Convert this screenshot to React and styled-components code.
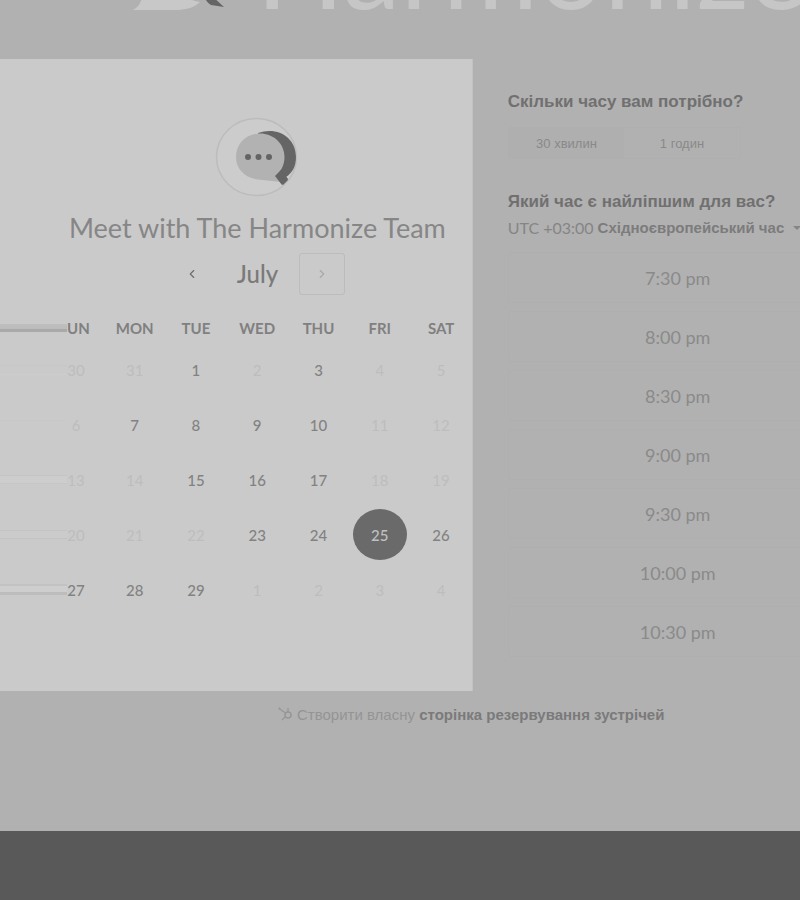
import React, { useState } from "react";
import styled, { createGlobalStyle } from "styled-components";
import { ChevronLeft, ChevronRight } from "lucide-react";

const GlobalStyle = createGlobalStyle`
  *, *::before, *::after { box-sizing: border-box; }
  body { margin: 0; background: #b1b1b1; }
  button { font: inherit; color: inherit; background: none; border: 0; padding: 0; cursor: pointer; }
  a { color: inherit; text-decoration: none; }
`;

const Page = styled.div`
  min-height: 100vh;
  display: flex;
  flex-direction: column;
  overflow: hidden;
  background: #b1b1b1;
  color: #747474;
  font-family: Lato, "Liberation Sans", sans-serif;
`;

const Header = styled.header`
  height: 59px;
  padding: 0 0 34px 132px;
  display: flex;
  align-items: flex-end;
  gap: 28px;
  overflow: hidden;
`;

const BrandMark = styled.svg`
  flex: none;
  width: 96px;
  height: 100px;
  margin-bottom: 15px;
`;

const BrandName = styled.span`
  flex: none;
  color: #c6c6c6;
  font-size: 116px;
  line-height: 120px;
  white-space: nowrap;
`;

const Scheduler = styled.main`
  display: grid;
  grid-template-columns: 13fr 9fr;
`;

const CalendarPanel = styled.section`
  min-width: 0;
  min-height: 632px;
  padding-top: 57px;
  background: #cacaca;
  border-right: 1px solid #c2c2c2;
`;

const Intro = styled.div`
  margin-left: 43px;
  display: flex;
  flex-direction: column;
  align-items: center;
`;

const Avatar = styled.svg`
  width: 84px;
  height: 82px;
`;

const Title = styled.h1`
  margin: 12px 0 0;
  color: #868686;
  font-size: 27px;
  line-height: 36px;
  font-weight: 400;
  white-space: nowrap;
`;

const MonthBar = styled.div`
  margin-top: 7px;
  display: grid;
  grid-template-columns: 46px 84px 46px;
  align-items: center;
`;

const MonthName = styled.h2`
  margin: 0;
  color: #7a7a7a;
  font-size: 24px;
  line-height: 42px;
  font-weight: 500;
  text-align: center;
`;

const MonthButton = styled.button`
  height: 42px;
  display: flex;
  align-items: center;
  justify-content: center;
  border-radius: 3px;
  border: 1px solid ${(p) => (p.$framed ? "#bcbcbc" : "transparent")};
  color: ${(p) => (p.$framed ? "#a8a8a8" : "#6c6c6c")};
`;

const CalendarTable = styled.table`
  width: 100%;
  margin-top: 19px;
  table-layout: fixed;
  border-collapse: collapse;
`;

const StreakCol = styled.col`
  width: 67px;
`;

const FirstCol = styled.col`
  width: 37px;
`;

const Weekday = styled.th`
  height: 28px;
  padding: 0;
  color: #808080;
  font-size: 15px;
  font-weight: 700;
  text-align: ${(p) => (p.$first ? "left" : "center")};
  vertical-align: middle;
`;

const DayCell = styled.td`
  height: 55px;
  padding: 0;
  text-align: ${(p) => (p.$first ? "left" : "center")};
`;

const tones = {
  open: "#828282",
  muted: "#bdbdbd",
  selected: "#c0c0c0",
};

const Day = styled.button`
  height: 51px;
  width: ${(p) => (p.$first ? "18px" : "54px")};
  border-radius: ${(p) => (p.$first ? "0" : "50%")};
  font-size: 15px;
  font-weight: ${(p) => (p.$tone === "muted" ? 400 : 500)};
  color: ${(p) => tones[p.$tone]};
  background: ${(p) => (p.$tone === "selected" ? "#6a6a6a" : "transparent")};
`;

const Streak = styled.div`
  height: ${(p) => p.$size}px;
  border-top: ${(p) => (p.$strong ? 2 : 1)}px solid ${(p) => p.$top};
  border-bottom: ${(p) => (p.$strong ? 3 : 1)}px solid ${(p) => p.$bottom};
  background: ${(p) => p.$fill};
`;

const TimePanel = styled.section`
  min-width: 0;
  padding: 31px 0 0 35px;
  overflow: hidden;
`;

const Question = styled.h2`
  margin: 0;
  color: #707070;
  font-family: "Liberation Sans", sans-serif;
  font-size: 17px;
  line-height: 24px;
  font-weight: 700;
  white-space: nowrap;
`;

const Durations = styled.div`
  width: 233px;
  height: 32px;
  margin: 13px 0 31px;
  display: grid;
  grid-template-columns: 1fr 1fr;
  border: 1px solid #afafaf;
`;

const Duration = styled.button`
  font-family: "Liberation Sans", sans-serif;
  font-size: 13px;
  color: #898989;
  background: ${(p) => (p.$active ? "#afafaf" : "transparent")};
`;

const ZoneButton = styled.button`
  min-width: 300px;
  display: flex;
  align-items: center;
  gap: 4px;
  color: #858585;
  font-size: 16px;
  line-height: 28px;
  white-space: nowrap;

  strong {
    color: #7c7c7c;
    font-family: "Liberation Sans", sans-serif;
    font-size: 15px;
  }
`;

const Caret = styled.svg`
  width: 8px;
  height: 4px;
  margin-left: 5px;
`;

const Slots = styled.ul`
  width: 340px;
  margin: 10px 0 0;
  padding: 0;
  display: grid;
  gap: 8px;
  list-style: none;
`;

const Slot = styled.button`
  width: 100%;
  height: 51px;
  border: 1px solid #afafaf;
  border-radius: 3px;
  color: #8a8a8a;
  font-size: 18px;
`;

const Credit = styled.p`
  flex: 1;
  margin: 0;
  padding: 14px 0 0 278px;
  display: flex;
  align-items: flex-start;
  gap: 4px;
  color: #949494;
  font-family: "Liberation Sans", sans-serif;
  font-size: 15px;
  line-height: 20px;
  white-space: nowrap;

  a { color: #7a7a7a; font-weight: 700; }
`;

const Sprocket = styled.svg`
  width: 15px;
  height: 15px;
  margin-top: 2px;
`;

const Footer = styled.footer`
  height: 69px;
  background: #595959;
`;

const weekdays = ["UN", "MON", "TUE", "WED", "THU", "FRI", "SAT"];

const weeks = [
  { days: [30, 31, 1, 2, 3, 4, 5], open: [1, 3], streak: { $size: 10, $top: "#c7c7c7", $bottom: "#cdcdcd", $fill: "#cacaca" } },
  { days: [6, 7, 8, 9, 10, 11, 12], open: [7, 8, 9, 10], streak: { $size: 10, $top: "#c8c8c8", $bottom: "#cacaca", $fill: "#cacaca" } },
  { days: [13, 14, 15, 16, 17, 18, 19], open: [15, 16, 17], streak: { $size: 9, $top: "#c4c4c4", $bottom: "#c6c6c6", $fill: "#cdcdcd" } },
  { days: [20, 21, 22, 23, 24, 25, 26], open: [23, 24, 26], selected: 25, streak: { $size: 9, $top: "#c4c4c4", $bottom: "#c3c3c3", $fill: "#cbcbcb" } },
  { days: [27, 28, 29, 1, 2, 3, 4], open: [27, 28, 29], streak: { $size: 11, $strong: true, $top: "#c2c2c2", $bottom: "#bdbdbd", $fill: "#cecece" } },
];

const slots = ["7:30 pm", "8:00 pm", "8:30 pm", "9:00 pm", "9:30 pm", "10:00 pm", "10:30 pm"];

function Calendar() {
  return (
    <CalendarTable>
      <colgroup>
        <StreakCol />
        <FirstCol />
        <col span={6} />
      </colgroup>
      <thead>
        <tr>
          <Weekday as="td">
            <Streak $size={8} $strong $top="#bebebe" $bottom="#a9a9a9" $fill="#bcbcbc" />
          </Weekday>
          {weekdays.map((name, i) => (
            <Weekday key={name} scope="col" $first={i === 0}>{name}</Weekday>
          ))}
        </tr>
      </thead>
      <tbody>
        {weeks.map((week, w) => (
          <tr key={w}>
            <DayCell><Streak {...week.streak} /></DayCell>
            {week.days.map((day, i) => {
              const tone = day === week.selected ? "selected" : week.open.includes(day) ? "open" : "muted";
              return (
                <DayCell key={i} $first={i === 0}>
                  <Day type="button" $first={i === 0} $tone={tone}>{day}</Day>
                </DayCell>
              );
            })}
          </tr>
        ))}
      </tbody>
    </CalendarTable>
  );
}

export default function App() {
  const [duration, setDuration] = useState(30);
  return (
    <Page>
      <GlobalStyle />
      <Header>
        <BrandMark viewBox="0 0 96 100" aria-hidden="true">
          <path d="M1 100C8 96 10 91 13 76L45 79C52 87 60 91 68 92C62 98 53 100 43 100Z" fill="#c8c8c8" />
          <path d="M67 82L79 85L92 97L79 95C75 93 75 90 67 82Z" fill="#656565" />
        </BrandMark>
        <BrandName>Harmonize</BrandName>
      </Header>

      <Scheduler>
        <CalendarPanel>
          <Intro>
            <Avatar viewBox="0 0 84 82" aria-hidden="true">
              <ellipse cx="41.5" cy="41" rx="40" ry="38.5" fill="#cccccc" stroke="#bcbcbc" strokeWidth="1.5" />
              <path d="M43 17C62 10 81 21 81 41C81 51 77 57 71 61L73 64L68 69L60 61Z" fill="#656565" />
              <path d="M45 17.500C58 17.500 69.500 27 69.500 41C69.500 50 65 56 61 60L66 66L43 63.500C30 62 21 53 21 41C21 27 32 17.500 45 17.500Z" fill="#b2b2b2" />
              <path d="M60 60L66 54L73 63L67 69Z" fill="#656565" />
              <circle cx="33" cy="41" r="3" fill="#646464" />
              <circle cx="43.500" cy="41" r="3" fill="#646464" />
              <circle cx="54" cy="41" r="3" fill="#646464" />
            </Avatar>
            <Title>Meet with The Harmonize Team</Title>
            <MonthBar>
              <MonthButton type="button" aria-label="Previous month"><ChevronLeft size={14} /></MonthButton>
              <MonthName>July</MonthName>
              <MonthButton type="button" aria-label="Next month" $framed><ChevronRight size={14} /></MonthButton>
            </MonthBar>
          </Intro>
          <Calendar />
        </CalendarPanel>

        <TimePanel>
          <Question>Скільки часу вам потрібно?</Question>
          <Durations>
            <Duration type="button" $active={duration === 30} onClick={() => setDuration(30)}>30 хвилин</Duration>
            <Duration type="button" $active={duration === 60} onClick={() => setDuration(60)}>1 годин</Duration>
          </Durations>
          <Question>Який час є найліпшим для вас?</Question>
          <ZoneButton type="button">
            UTC +03:00 <strong>Східноєвропейський час</strong>
            <Caret viewBox="0 0 8 4" aria-hidden="true"><path d="M0 0H8L4 4Z" fill="currentColor" /></Caret>
          </ZoneButton>
          <Slots>
            {slots.map((time) => (
              <li key={time}><Slot type="button">{time}</Slot></li>
            ))}
          </Slots>
        </TimePanel>
      </Scheduler>

      <Credit>
        <Sprocket viewBox="0 0 15 15" fill="none" stroke="#969696" aria-hidden="true">
          <path d="M1 1.500L7.500 6M10 1V5M7 10L4 13" strokeWidth="1.300" />
          <circle cx="10" cy="8" r="3" strokeWidth="1.500" />
          <circle cx="1.500" cy="1.500" r="1" fill="#969696" stroke="none" />
        </Sprocket>
        <span>Створити власну <a href="#create">сторінка резервування зустрічей</a></span>
      </Credit>
      <Footer />
    </Page>
  );
}
